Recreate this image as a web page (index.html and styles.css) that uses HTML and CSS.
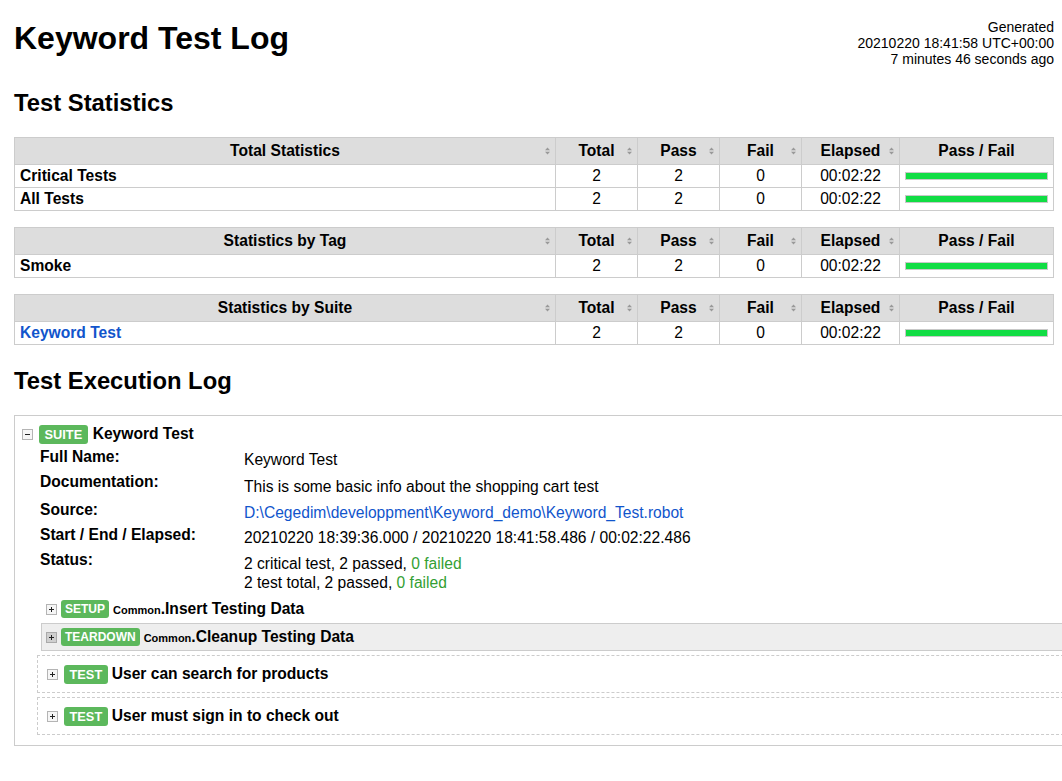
FILE: index.html
```html
<!DOCTYPE html>
<html lang="en">
<head>
<meta charset="utf-8">
<title>Keyword Test Log</title>
<link rel="stylesheet" href="styles.css">
</head>
<body>
<header class="top">
  <h1 class="title">Keyword Test Log</h1>
  <div class="generated">Generated<br>20210220 18:41:58 UTC+00:00<br>7 minutes 46 seconds ago</div>
</header>

<h2 class="section">Test Statistics</h2>

<table class="stats">
  <colgroup><col class="c-name"><col class="c-num"><col class="c-num"><col class="c-num"><col class="c-elapsed"><col class="c-graph"></colgroup>
  <thead>
    <tr>
      <th>Total Statistics<span class="sort"><svg width="5" height="8" viewBox="0 0 5 8"><path d="M0 3.3L2.5 0.5L5 3.3Z M0 4.7L2.5 7.5L5 4.7Z" fill="#999"/></svg></span></th>
      <th>Total<span class="sort"><svg width="5" height="8" viewBox="0 0 5 8"><path d="M0 3.3L2.5 0.5L5 3.3Z M0 4.7L2.5 7.5L5 4.7Z" fill="#999"/></svg></span></th>
      <th>Pass<span class="sort"><svg width="5" height="8" viewBox="0 0 5 8"><path d="M0 3.3L2.5 0.5L5 3.3Z M0 4.7L2.5 7.5L5 4.7Z" fill="#999"/></svg></span></th>
      <th>Fail<span class="sort"><svg width="5" height="8" viewBox="0 0 5 8"><path d="M0 3.3L2.5 0.5L5 3.3Z M0 4.7L2.5 7.5L5 4.7Z" fill="#999"/></svg></span></th>
      <th>Elapsed<span class="sort"><svg width="5" height="8" viewBox="0 0 5 8"><path d="M0 3.3L2.5 0.5L5 3.3Z M0 4.7L2.5 7.5L5 4.7Z" fill="#999"/></svg></span></th>
      <th>Pass / Fail</th>
    </tr>
  </thead>
  <tbody>
    <tr><td class="name">Critical Tests</td><td>2</td><td>2</td><td>0</td><td>00:02:22</td><td class="graph-cell"><div class="graph"></div></td></tr>
    <tr><td class="name">All Tests</td><td>2</td><td>2</td><td>0</td><td>00:02:22</td><td class="graph-cell"><div class="graph"></div></td></tr>
  </tbody>
</table>

<table class="stats">
  <colgroup><col class="c-name"><col class="c-num"><col class="c-num"><col class="c-num"><col class="c-elapsed"><col class="c-graph"></colgroup>
  <thead>
    <tr>
      <th>Statistics by Tag<span class="sort"><svg width="5" height="8" viewBox="0 0 5 8"><path d="M0 3.3L2.5 0.5L5 3.3Z M0 4.7L2.5 7.5L5 4.7Z" fill="#999"/></svg></span></th>
      <th>Total<span class="sort"><svg width="5" height="8" viewBox="0 0 5 8"><path d="M0 3.3L2.5 0.5L5 3.3Z M0 4.7L2.5 7.5L5 4.7Z" fill="#999"/></svg></span></th>
      <th>Pass<span class="sort"><svg width="5" height="8" viewBox="0 0 5 8"><path d="M0 3.3L2.5 0.5L5 3.3Z M0 4.7L2.5 7.5L5 4.7Z" fill="#999"/></svg></span></th>
      <th>Fail<span class="sort"><svg width="5" height="8" viewBox="0 0 5 8"><path d="M0 3.3L2.5 0.5L5 3.3Z M0 4.7L2.5 7.5L5 4.7Z" fill="#999"/></svg></span></th>
      <th>Elapsed<span class="sort"><svg width="5" height="8" viewBox="0 0 5 8"><path d="M0 3.3L2.5 0.5L5 3.3Z M0 4.7L2.5 7.5L5 4.7Z" fill="#999"/></svg></span></th>
      <th>Pass / Fail</th>
    </tr>
  </thead>
  <tbody>
    <tr><td class="name">Smoke</td><td>2</td><td>2</td><td>0</td><td>00:02:22</td><td class="graph-cell"><div class="graph"></div></td></tr>
  </tbody>
</table>

<table class="stats">
  <colgroup><col class="c-name"><col class="c-num"><col class="c-num"><col class="c-num"><col class="c-elapsed"><col class="c-graph"></colgroup>
  <thead>
    <tr>
      <th>Statistics by Suite<span class="sort"><svg width="5" height="8" viewBox="0 0 5 8"><path d="M0 3.3L2.5 0.5L5 3.3Z M0 4.7L2.5 7.5L5 4.7Z" fill="#999"/></svg></span></th>
      <th>Total<span class="sort"><svg width="5" height="8" viewBox="0 0 5 8"><path d="M0 3.3L2.5 0.5L5 3.3Z M0 4.7L2.5 7.5L5 4.7Z" fill="#999"/></svg></span></th>
      <th>Pass<span class="sort"><svg width="5" height="8" viewBox="0 0 5 8"><path d="M0 3.3L2.5 0.5L5 3.3Z M0 4.7L2.5 7.5L5 4.7Z" fill="#999"/></svg></span></th>
      <th>Fail<span class="sort"><svg width="5" height="8" viewBox="0 0 5 8"><path d="M0 3.3L2.5 0.5L5 3.3Z M0 4.7L2.5 7.5L5 4.7Z" fill="#999"/></svg></span></th>
      <th>Elapsed<span class="sort"><svg width="5" height="8" viewBox="0 0 5 8"><path d="M0 3.3L2.5 0.5L5 3.3Z M0 4.7L2.5 7.5L5 4.7Z" fill="#999"/></svg></span></th>
      <th>Pass / Fail</th>
    </tr>
  </thead>
  <tbody>
    <tr><td class="name"><a class="link" href="#">Keyword Test</a></td><td>2</td><td>2</td><td>0</td><td>00:02:22</td><td class="graph-cell"><div class="graph"></div></td></tr>
  </tbody>
</table>

<h2 class="section">Test Execution Log</h2>

<div class="suite">
  <div class="elem-header suite-header">
    <span class="toggle minus"></span>
    <span class="label label-big">SUITE</span>
    <span class="elem-name">Keyword Test</span>
  </div>
  <div class="metadata">
    <div class="meta-label">Full Name:</div>
    <div class="meta-value">Keyword Test</div>
    <div class="meta-label">Documentation:</div>
    <div class="meta-value doc">This is some basic info about the shopping cart test</div>
    <div class="meta-label">Source:</div>
    <div class="meta-value"><a class="link plain" href="#">D:\Cegedim\developpment\Keyword_demo\Keyword_Test.robot</a></div>
    <div class="meta-label">Start / End / Elapsed:</div>
    <div class="meta-value">20210220 18:39:36.000 / 20210220 18:41:58.486 / 00:02:22.486</div>
    <div class="meta-label">Status:</div>
    <div class="meta-value status">2 critical test, 2 passed, <span class="pass">0 failed</span><br>2 test total, 2 passed, <span class="pass">0 failed</span></div>
  </div>
  <div class="children">
    <div class="keyword">
      <div class="elem-header kw-header">
        <span class="toggle plus"></span>
        <span class="label label-small">SETUP</span>
        <span class="elem-name"><span class="parent">Common</span>.Insert Testing Data</span>
      </div>
    </div>
    <div class="keyword">
      <div class="elem-header kw-header hover">
        <span class="toggle plus"></span>
        <span class="label label-small">TEARDOWN</span>
        <span class="elem-name"><span class="parent">Common</span>.Cleanup Testing Data</span>
      </div>
    </div>
    <div class="test">
      <div class="elem-header test-header">
        <span class="toggle plus"></span>
        <span class="label label-big">TEST</span>
        <span class="elem-name">User can search for products</span>
      </div>
    </div>
    <div class="test">
      <div class="elem-header test-header">
        <span class="toggle plus"></span>
        <span class="label label-big">TEST</span>
        <span class="elem-name">User must sign in to check out</span>
      </div>
    </div>
  </div>
</div>
</body>
</html>
```

FILE: styles.css
```css
html {
  overflow-x: hidden;
}

body {
  margin: 0;
  padding: 0 8px 0 14px;
  background: #fff;
  color: #000;
  font-family: "Liberation Sans", Arial, sans-serif;
  font-size: 15.6px;
}

.top {
  display: flex;
  justify-content: space-between;
  align-items: flex-start;
}

.title {
  margin: 20px 0 0;
  font-size: 32px;
  line-height: 36px;
  font-weight: bold;
}

.generated {
  margin-top: 19px;
  font-size: 14px;
  line-height: 16px;
  text-align: right;
  white-space: nowrap;
}

.section {
  margin: 21.5px 0;
  font-size: 23.8px;
  line-height: 27px;
  font-weight: bold;
}

/* statistics tables */
.stats {
  width: 100%;
  border-collapse: collapse;
  table-layout: fixed;
  margin: 0 0 16px;
}

.c-num { width: 82px; }
.c-elapsed { width: 98px; }
.c-graph { width: 154px; }

.stats th,
.stats td {
  border: 1px solid #ccc;
}

.stats th {
  position: relative;
  background: #ddd;
  padding: 4px 10px;
  line-height: 18px;
  font-weight: bold;
  text-align: center;
  white-space: nowrap;
}

.stats td {
  padding: 2px 5px;
  line-height: 18px;
  text-align: center;
  white-space: nowrap;
}

.stats td.name {
  text-align: left;
  font-weight: bold;
}

.sort {
  position: absolute;
  right: 5px;
  top: 50%;
  margin-top: -4px;
  width: 5px;
  height: 8px;
  line-height: 0;
}

.graph-cell {
  vertical-align: middle;
}

.stats td.graph-cell {
  padding: 0 5px;
}

.graph {
  height: 6px;
  border: 1px solid #c8c8c8;
  background: #11dd44;
}

.link {
  color: #1155cc;
  text-decoration: none;
}

.link.plain {
  font-weight: normal;
}

/* execution log */
.suite {
  width: 1100px;
  box-sizing: border-box;
  border: 1px solid #ccc;
  padding: 4px 4px 6px;
}

.elem-header {
  display: flex;
  align-items: center;
  height: 28px;
  box-sizing: border-box;
  border: 1px solid transparent;
  padding: 0 4px;
  white-space: nowrap;
}

.suite-header {
  padding-left: 2px;
}

.elem-header.hover {
  background: #eee;
  border-color: #ccc;
}

.toggle {
  position: relative;
  flex: none;
  width: 9px;
  height: 9px;
  border: 1px solid #b4b4b4;
  background: #f6f6f6;
  margin-right: 4px;
}

.suite-header .toggle {
  margin-right: 6px;
}

.test-header .toggle {
  margin-right: 6px;
}

.hover .toggle {
  background: #cfcfcf;
  border-color: #aaa;
}

.toggle::before {
  content: "";
  position: absolute;
  left: 2px;
  top: 4px;
  width: 5px;
  height: 1px;
  background: #222;
}

.toggle.plus::after {
  content: "";
  position: absolute;
  left: 4px;
  top: 2px;
  width: 1px;
  height: 5px;
  background: #222;
}

.label {
  flex: none;
  color: #fff;
  background: #5cb85c;
  border-radius: 3px;
  font-weight: bold;
  margin-right: 4px;
}

.label-big {
  font-size: 12.8px;
  line-height: 19px;
  padding: 0 5.5px;
}

.label-small {
  font-size: 12px;
  line-height: 18px;
  padding: 0 4px;
}

.elem-name {
  font-weight: bold;
}

.suite-header .elem-name {
  margin-left: 1px;
}

.parent {
  font-size: 11px;
  font-weight: bold;
}

.metadata {
  display: grid;
  grid-template-columns: 204px auto;
  row-gap: 4px;
  padding-left: 21px;
  margin-bottom: 3px;
  line-height: 18px;
}

.meta-label {
  font-weight: bold;
  white-space: nowrap;
}

.meta-value {
  padding-top: 3px;
}

.meta-value.doc {
  padding-top: 5px;
  padding-bottom: 1px;
}

.meta-value.status {
  line-height: 19px;
}

.pass {
  color: #33a033;
}

.children {
  margin-left: 18px;
}

.keyword {
  margin-left: 4px;
}

.test {
  border: 1px dashed #ccc;
  padding: 4px;
  margin: 4px 0;
}
```
